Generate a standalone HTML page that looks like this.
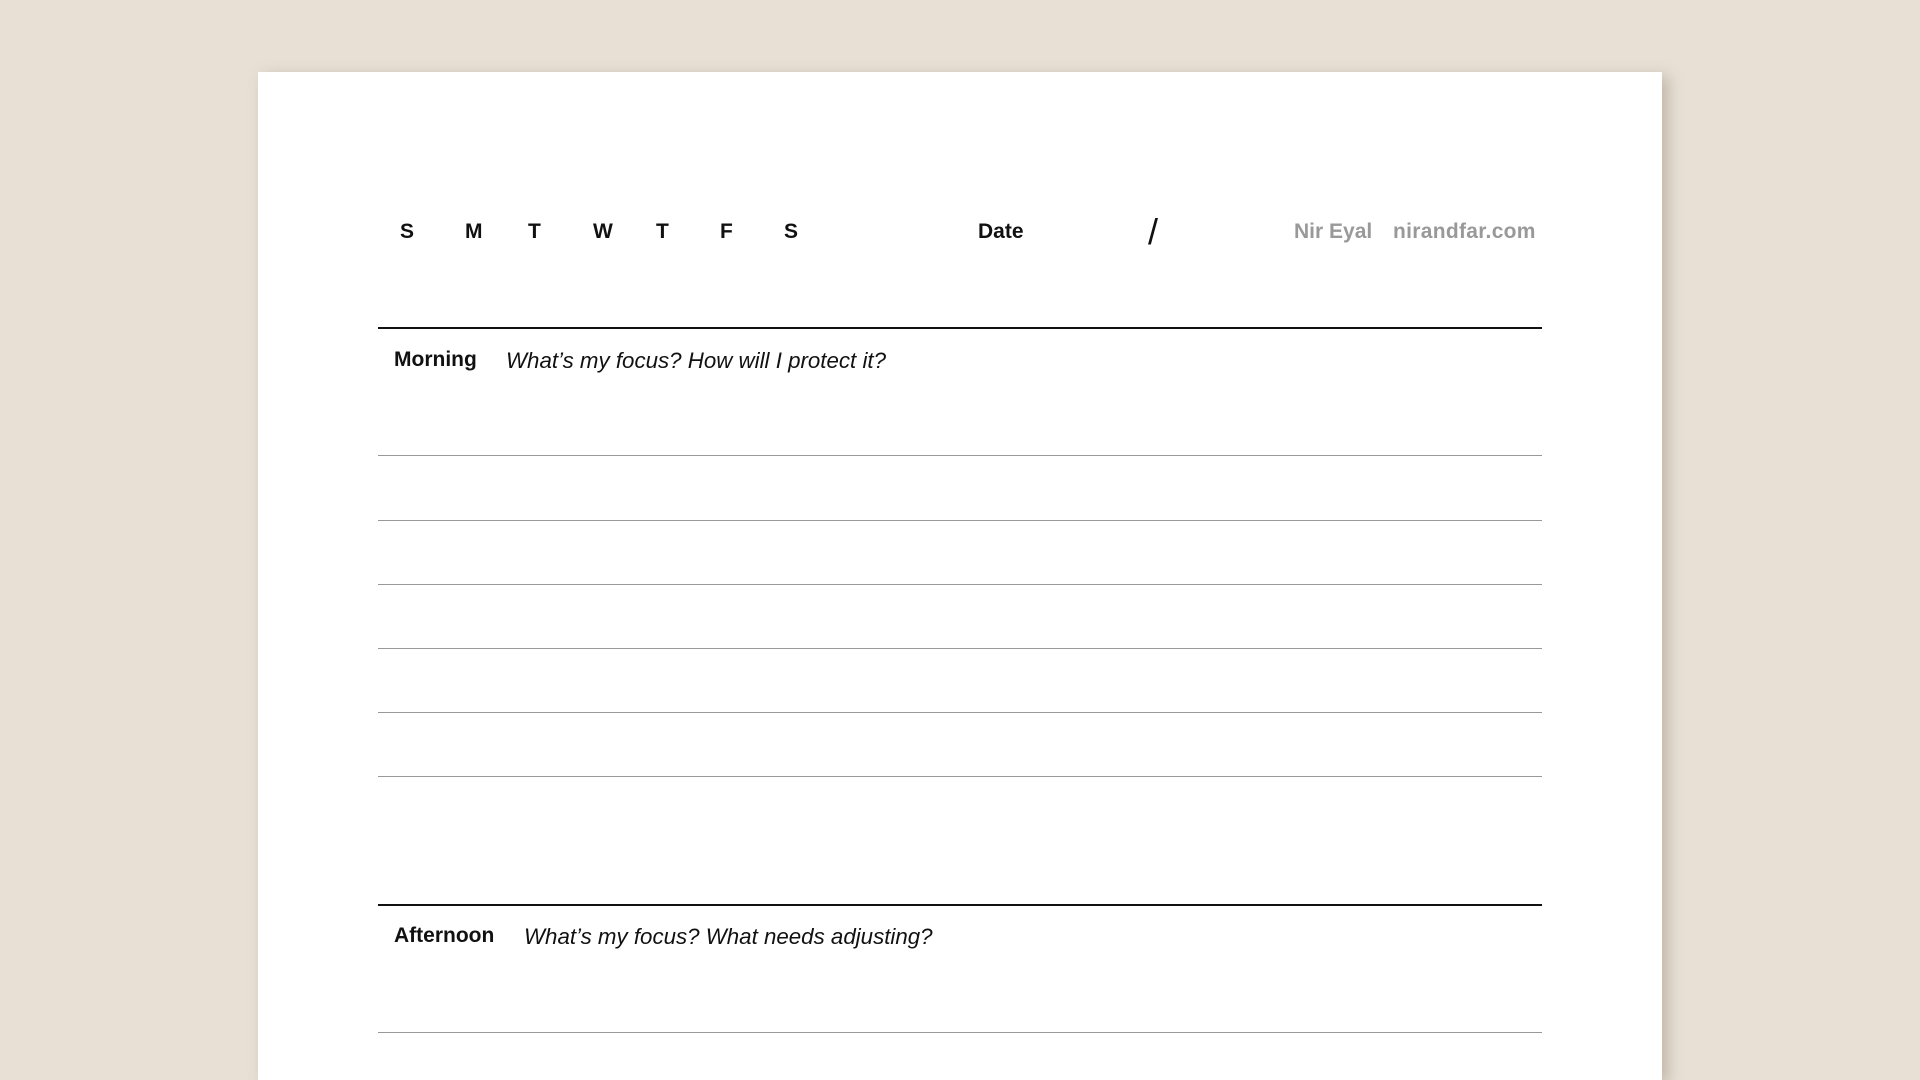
<!DOCTYPE html>
<html><head><meta charset="utf-8"><style>
html,body{margin:0;width:1920px;height:1080px;overflow:hidden}
body{background:#e8e0d5;position:relative;font-family:"Liberation Sans",sans-serif}
.page{position:absolute;left:258px;top:72px;width:1404px;height:1008px;background:#fff;box-shadow:6px 4px 14px rgba(120,105,85,0.35)}
.t{position:absolute;white-space:nowrap;line-height:1}
.h{font-size:21px;font-weight:bold;color:#111;top:221px}
.g{font-size:21px;font-weight:bold;color:#999;top:221px}
.thick{position:absolute;left:378px;width:1164px;height:2px;background:#111}
.thin{position:absolute;left:378px;width:1164px;height:1px;background:#999}
.lab{font-size:21px;font-weight:bold;color:#111}
.it{font-size:22.3px;font-style:italic;color:#111}
</style></head><body>
<div class="page"></div>
<div class="t h" style="left:400px">S</div>
<div class="t h" style="left:465px">M</div>
<div class="t h" style="left:528px">T</div>
<div class="t h" style="left:593px">W</div>
<div class="t h" style="left:656px">T</div>
<div class="t h" style="left:720px">F</div>
<div class="t h" style="left:784px">S</div>
<div class="t h" style="left:978px">Date</div>
<div class="t" style="left:1148px;top:214px;font-size:36px;color:#111;font-weight:300">/</div>
<div class="t g" style="left:1294px">Nir Eyal</div>
<div class="t g" style="left:1393px;letter-spacing:0.3px">nirandfar.com</div>
<div class="thick" style="top:327px"></div>
<div class="t lab" style="left:394px;top:349px">Morning</div>
<div class="t it" style="left:506px;top:350px">What’s my focus? How will I protect it?</div>
<div class="thin" style="top:455px"></div>
<div class="thin" style="top:520px"></div>
<div class="thin" style="top:584px"></div>
<div class="thin" style="top:648px"></div>
<div class="thin" style="top:712px"></div>
<div class="thin" style="top:776px"></div>
<div class="thick" style="top:904px"></div>
<div class="t lab" style="left:394px;top:925px">Afternoon</div>
<div class="t it" style="left:524px;top:926px">What’s my focus? What needs adjusting?</div>
<div class="thin" style="top:1032px"></div>
</body></html>
